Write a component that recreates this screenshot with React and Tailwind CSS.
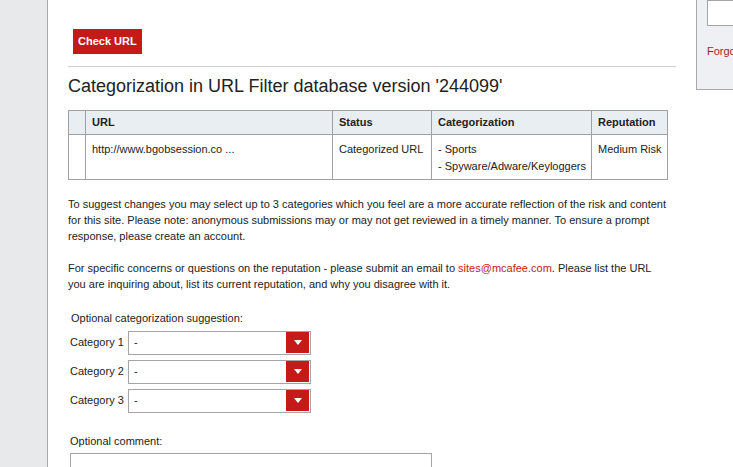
import React from 'react';

const categories = ['Category 1', 'Category 2', 'Category 3'];

function CategorySelect({ label }) {
  return (
    <div className="flex items-center h-[24px] mb-[5px]">
      <span className="w-[58px]">{label}</span>
      <div className="flex items-center justify-between w-[183px] h-[24px] border border-[#a5a5a5] bg-white pl-[5px] pr-[1px]">
        <span>-</span>
        <span className="flex items-center justify-center w-[23px] h-[21px] bg-[#c41a1a]">
          <svg width="8" height="5" viewBox="0 0 8 5">
            <path d="M0 0h8L4 5z" fill="#fff" />
          </svg>
        </span>
      </div>
    </div>
  );
}

export default function App() {
  const cell = 'border border-[#a0a0a0] px-[6px] whitespace-nowrap';
  return (
    <div className="flex w-[733px] h-[467px] overflow-hidden bg-white text-[11px] text-[#222] font-['Liberation_Sans',Arial,sans-serif]">
      {/* page gutter */}
      <div className="w-[48px] shrink-0 bg-[#e8e9ea] border-r border-[#a9a9a9]" />

      {/* main column */}
      <div className="w-[628px] shrink-0 pl-[20px] pt-[29px]">
        <button className="ml-[5px] h-[25px] px-[5px] bg-[#c41a1a] text-white font-bold text-[11px]">
          Check URL
        </button>
        <div className="mt-[12px] border-t border-[#cfcfcf]" />
        <h2 className="mt-[8px] text-[18px] leading-[22px] text-[#222]">
          Categorization in URL Filter database version '244099'
        </h2>

        <table className="mt-[13px] w-[599px] table-fixed border-collapse border border-[#a0a0a0]">
          <colgroup>
            <col className="w-[17px]" />
            <col className="w-[247px]" />
            <col className="w-[99px]" />
            <col className="w-[160px]" />
            <col className="w-[76px]" />
          </colgroup>
          <thead>
            <tr className="bg-[#e9eef2] h-[24px] text-left font-bold">
              <th className={cell} />
              <th className={cell}>URL</th>
              <th className={cell}>Status</th>
              <th className={cell}>Categorization</th>
              <th className={cell}>Reputation</th>
            </tr>
          </thead>
          <tbody>
            <tr className="h-[45px] align-top leading-[17px]">
              <td className={cell} />
              <td className={`${cell} pt-[6px]`}>http://www.bgobsession.co ...</td>
              <td className={`${cell} pt-[6px]`}>Categorized URL</td>
              <td className={`${cell} pt-[6px]`}>
                <div>- Sports</div>
                <div>- Spyware/Adware/Keyloggers</div>
              </td>
              <td className={`${cell} pt-[6px]`}>Medium Risk</td>
            </tr>
          </tbody>
        </table>

        <p className="mt-[16px] w-[601px] leading-[16px]">
          To suggest changes you may select up to 3 categories which you feel are a more accurate reflection of the risk and content for this site. Please note: anonymous submissions may or may not get reviewed in a timely manner. To ensure a prompt response, please create an account.
        </p>
        <p className="mt-[16px] w-[601px] leading-[16px]">
          For specific concerns or questions on the reputation - please submit an email to{' '}
          <a className="text-[#c41a1a]">sites@mcafee.com</a>. Please list the URL you are inquiring about, list its current reputation, and why you disagree with it.
        </p>

        <div className="mt-[18px] pl-[2px]">
          <div className="mb-[4px] pl-[1px]">Optional categorization suggestion:</div>
          {categories.map((c) => (
            <CategorySelect key={c} label={c} />
          ))}
          <div className="mt-[20px]">Optional comment:</div>
          <div className="mt-[4px] w-[362px] h-[60px] border border-[#a5a5a5]" />
        </div>
      </div>

      {/* login sidebar */}
      <div className="ml-[20px] w-[200px] h-[91px] shrink-0 bg-[#eef0f3] border border-[#a9a9a9] -mt-[1px] pl-[10px]">
        <div className="h-[26px] w-[150px] bg-white border border-[#a5a5a5]" />
        <div className="mt-[17px] text-[#a81c2a]">Forgot</div>
      </div>
    </div>
  );
}
